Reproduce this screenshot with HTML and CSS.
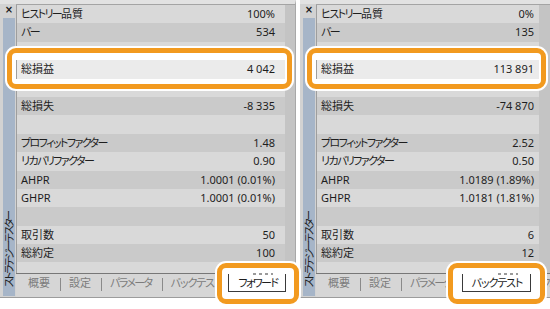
FILE: index.html
```html
<!DOCTYPE html>
<html lang="ja">
<head>
<meta charset="utf-8">
<title>ストラテジーテスター</title>
<link rel="stylesheet" href="styles.css">
</head>
<body>
<div class="page">
  <section class="panel panel-a">
    <div class="strip">
      <span class="close">×</span>
      <div class="strip-bar"><span class="strip-label">ストラテジーテスター</span></div>
    </div>
    <div class="main">
      <div class="list">
        <div class="row"><span><span class="kana">ヒストリー</span>品質</span><span>100%</span></div>
        <div class="row"><span class="kana">バー</span><span>534</span></div>
        <div class="row"></div>
        <div class="row row-hl"><span>総損益</span><span>4 042</span></div>
        <div class="row"></div>
        <div class="row"><span>総損失</span><span>-8 335</span></div>
        <div class="row"></div>
        <div class="row"><span class="kana">プロフィットファクター</span><span>1.48</span></div>
        <div class="row"><span class="kana">リカバリファクター</span><span>0.90</span></div>
        <div class="row"><span>AHPR</span><span>1.0001 (0.01%)</span></div>
        <div class="row"><span>GHPR</span><span>1.0001 (0.01%)</span></div>
        <div class="row"></div>
        <div class="row"><span>取引数</span><span>50</span></div>
        <div class="row"><span>総約定</span><span>100</span></div>
        <div class="row"></div>
      </div>
      <div class="tabs">
        <span class="tab">概要</span><span class="sep"></span>
        <span class="tab">設定</span><span class="sep"></span>
        <span class="tab kana">パラメータ</span><span class="sep"></span>
        <span class="tab tab-wide">バックテスト</span>
        <span class="tab tab-active kana">フォワード<i class="specks"></i></span>
      </div>
    </div>
    <div class="mark mark-row"></div>
    <div class="mark mark-tab"></div>
  </section>

  <section class="panel panel-b">
    <div class="strip">
      <span class="close">×</span>
      <div class="strip-bar"><span class="strip-label">ストラテジーテスター</span></div>
    </div>
    <div class="main">
      <div class="list">
        <div class="row"><span><span class="kana">ヒストリー</span>品質</span><span>0%</span></div>
        <div class="row"><span class="kana">バー</span><span>135</span></div>
        <div class="row"></div>
        <div class="row row-hl"><span>総損益</span><span>113 891</span></div>
        <div class="row"></div>
        <div class="row"><span>総損失</span><span>-74 870</span></div>
        <div class="row"></div>
        <div class="row"><span class="kana">プロフィットファクター</span><span>2.52</span></div>
        <div class="row"><span class="kana">リカバリファクター</span><span>0.50</span></div>
        <div class="row"><span>AHPR</span><span>1.0189 (1.89%)</span></div>
        <div class="row"><span>GHPR</span><span>1.0181 (1.81%)</span></div>
        <div class="row"></div>
        <div class="row"><span>取引数</span><span>6</span></div>
        <div class="row"><span>総約定</span><span>12</span></div>
        <div class="row"></div>
      </div>
      <div class="tabs">
        <span class="tab">概要</span><span class="sep"></span>
        <span class="tab">設定</span><span class="sep"></span>
        <span class="tab kana">パラメータ</span>
        <span class="tab tab-active tab-wide">バックテスト<i class="specks"></i></span>
        <span class="tab tab-next kana">フォワード</span>
      </div>
    </div>
    <div class="mark mark-row"></div>
    <div class="mark mark-tab"></div>
  </section>
</div>
</body>
</html>
```

FILE: styles.css
```css
* {
  box-sizing: border-box;
  margin: 0;
  padding: 0;
}

html,
body {
  background: #ffffff;
}

body {
  font-family: "Noto Sans", "Noto Sans CJK JP", sans-serif;
  font-size: 11px;
  color: #1e1e1e;
  font-feature-settings: "palt";
}

.kana {
  letter-spacing: -1.6px;
}

.page {
  display: flex;
  gap: 4px;
  width: 550px;
  height: 309px;
  overflow: hidden;
}

.panel {
  position: relative;
  flex: none;
  display: flex;
  height: 298px;
  background: #c4c4c4;
  border-top: 4px solid #e2e2e2;
  border-bottom: 1px solid #9c9c9c;
}

.panel-a {
  width: 296px;
  border-right: 1px solid #a8a8a8;
}

.panel-b {
  width: 250px;
}

/* left vertical strip */
.strip {
  flex: none;
  width: 16px;
  display: flex;
  flex-direction: column;
  padding: 0 1px 0 3px;
  background: #d2d2d2;
}

.close {
  height: 14px;
  line-height: 12px;
  text-align: center;
  font-family: "DejaVu Sans", sans-serif;
  font-weight: bold;
  font-size: 10px;
  color: #1a1a1a;
}

.strip-bar {
  flex: 1;
  margin-bottom: 1px;
  background: #a6b5c8;
  display: flex;
  justify-content: center;
  align-items: flex-end;
  padding-bottom: 9px;
}

.strip-label {
  writing-mode: vertical-rl;
  text-orientation: sideways;
  transform: rotate(180deg);
  font-family: "Noto Sans CJK JP", sans-serif;
  font-size: 10.5px;
  line-height: 12px;
  letter-spacing: -2px;
  color: #222222;
}

/* main area */
.main {
  flex: 1;
  min-width: 0;
  display: flex;
  flex-direction: column;
  border-top: 1px solid #a4a4a4;
}

.list {
  height: 268px;
  overflow: hidden;
  margin-right: 10px;
}

.panel-b .list {
  margin-right: 11px;
}

.row {
  height: 18.4px;
  line-height: 18.4px;
  display: flex;
  justify-content: space-between;
  align-items: center;
  padding: 0 10px 0 4px;
  border-left: 1px solid #9e9e9e;
  background: #d9d9d9;
  white-space: nowrap;
}

.row:nth-child(even) {
  background: #cacaca;
}

.row.row-hl {
  position: relative;
  z-index: 3;
  background: #ebebeb;
}

.panel-b .row {
  padding-right: 5px;
}

/* tab bar */
.tabs {
  flex: none;
  height: 24px;
  display: flex;
  align-items: flex-start;
  padding-left: 12px;
  border-top: 1px solid #777777;
  background: #d6d6d6;
  color: #7c7c7c;
  white-space: nowrap;
}

.tab {
  flex: none;
  height: 17px;
  line-height: 17px;
}

.tab-wide {
  letter-spacing: -1.1px;
}

.sep {
  flex: none;
  width: 1px;
  height: 13px;
  margin: 4px 8px 0 10px;
  background: #8a8a8a;
}

.tab-active {
  position: relative;
  z-index: 3;
  height: 18px;
  margin-left: 7px;
  padding: 0 8px 0 9px;
  background: #ffffff;
  color: #1e1e1e;
  border: 1px solid #3a3a3a;
  border-top: 0;
}

.panel-b .tab-active {
  margin-left: 10px;
  padding: 0 8px 0 9px;
}

.specks {
  position: absolute;
  top: -1px;
  right: 12px;
  width: 20px;
  height: 2px;
  background: repeating-linear-gradient(90deg, #9a9a9a 0 3px, transparent 3px 6px);
}

.tab-next {
  margin-left: 10px;
}

/* orange highlight frames */
.mark {
  position: absolute;
  z-index: 2;
  border: 5px solid #f29a1f;
  border-radius: 9px;
  background: #ffffff;
  box-shadow: 0 0 0 2px #ffffff;
}

.panel-a .mark-row {
  left: 7px;
  top: 44px;
  width: 285px;
  height: 41px;
}

.panel-a .mark-tab {
  left: 217px;
  top: 259px;
  width: 82px;
  height: 41px;
}

.panel-b .mark-row {
  left: 7px;
  top: 44px;
  width: 239px;
  height: 41px;
}

.panel-b .mark-tab {
  left: 148px;
  top: 259px;
  width: 97px;
  height: 41px;
}
```
